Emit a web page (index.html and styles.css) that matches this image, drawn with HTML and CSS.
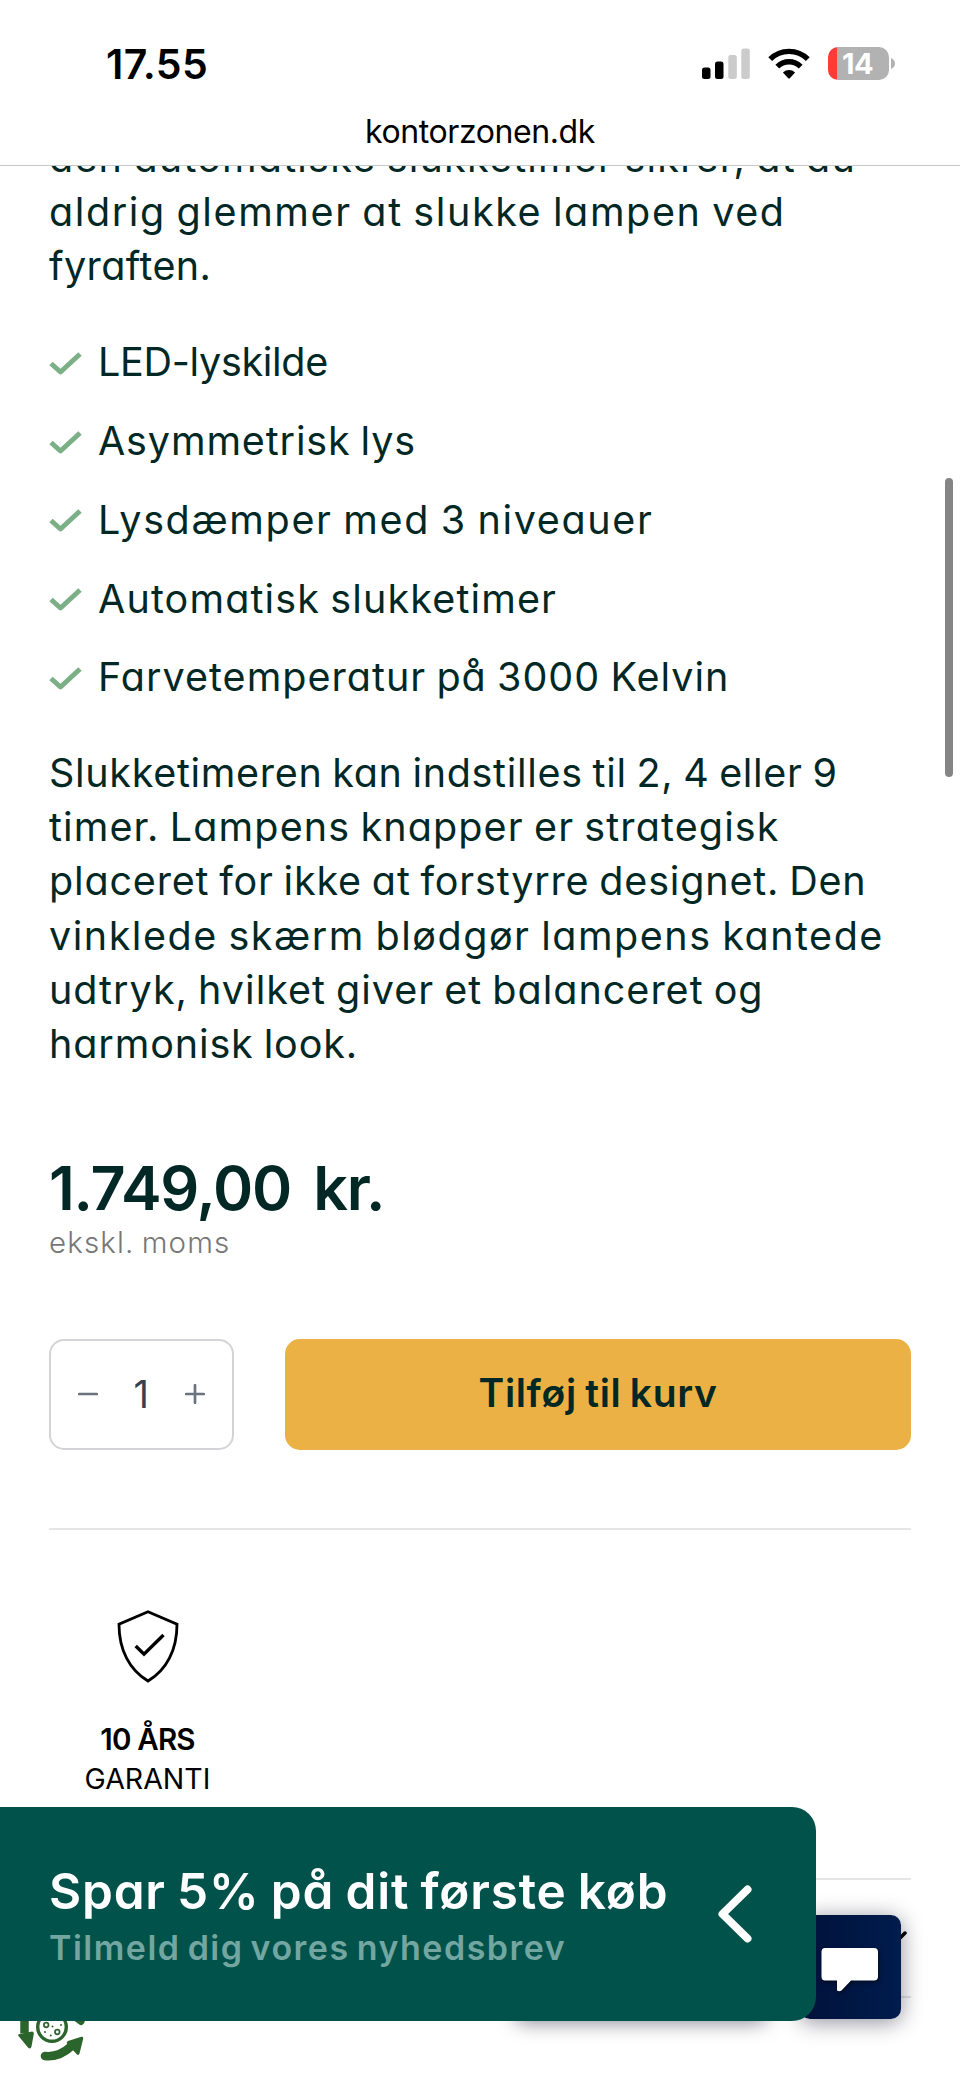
FILE: index.html
```html
<!DOCTYPE html>
<html lang="da">
<head>
<meta charset="utf-8">
<title>kontorzonen.dk</title>
<link rel="stylesheet" href="styles.css">
</head>
<body>
<div class="screen">
  <header class="browser-bar">
    <div class="status">
      <span class="clock">17.55</span>
      <div class="status-icons">
        <svg class="signal" width="50" height="32" viewBox="0 0 50 32">
          <rect x="1" y="19.500" width="8.500" height="11.500" rx="2.500" fill="#000"/>
          <rect x="14" y="13.500" width="8.500" height="17.500" rx="2.500" fill="#000"/>
          <rect x="27.300" y="7" width="8.500" height="24" rx="2.500" fill="#cbcbcb"/>
          <rect x="40.300" y="0.500" width="8.500" height="30.500" rx="2.500" fill="#cbcbcb"/>
        </svg>
        <svg class="wifi" width="42" height="32" viewBox="0 0 42 32">
          <g fill="none" stroke="#000" stroke-width="5.400">
            <path d="M2.200 11.200A26.500 26.500 0 0 1 39.800 11.200"/>
            <path d="M9.300 18.600A16.600 16.600 0 0 1 32.700 18.600"/>
          </g>
          <path d="M14.900 24.400A8.700 8.700 0 0 1 27.100 24.400L22 29.900Q21 30.900 20 29.900Z"/>
        </svg>
        <div class="battery"><span class="battery-level">14</span></div>
        <svg class="battery-tip" width="4" height="11" viewBox="0 0 4 11"><path d="M0 0Q4 2 4 5.500T0 11Z" fill="#b2b2b2"/></svg>
      </div>
    </div>
    <div class="address">kontorzonen.dk</div>
  </header>

  <main class="page">
    <p class="copy intro">
      <span class="line l1">den automatiske slukketimer sikrer, at du</span>
      <span class="line l2">aldrig glemmer at slukke lampen ved</span>
      <span class="line l3">fyraften.</span>
    </p>
    <ul class="features">
      <li><svg class="check" viewBox="0 0 34 26"><path d="M2 12.500L11.500 21L31 3"/></svg><span class="f1">LED-lyskilde</span></li>
      <li><svg class="check" viewBox="0 0 34 26"><path d="M2 12.500L11.500 21L31 3"/></svg><span class="f2">Asymmetrisk lys</span></li>
      <li><svg class="check" viewBox="0 0 34 26"><path d="M2 12.500L11.500 21L31 3"/></svg><span class="f3">Lysdæmper med 3 niveauer</span></li>
      <li><svg class="check" viewBox="0 0 34 26"><path d="M2 12.500L11.500 21L31 3"/></svg><span class="f4">Automatisk slukketimer</span></li>
      <li><svg class="check" viewBox="0 0 34 26"><path d="M2 12.500L11.500 21L31 3"/></svg><span class="f5">Farvetemperatur på 3000 Kelvin</span></li>
    </ul>
    <p class="copy">
      <span class="line d1">Slukketimeren kan indstilles til 2, 4 eller 9</span>
      <span class="line d2">timer. Lampens knapper er strategisk</span>
      <span class="line d3">placeret for ikke at forstyrre designet. Den</span>
      <span class="line d4">vinklede skærm blødgør lampens kantede</span>
      <span class="line d5">udtryk, hvilket giver et balanceret og</span>
      <span class="line d6">harmonisk look.</span>
    </p>

    <div class="price">1.749,00 kr.</div>
    <div class="vat">ekskl. moms</div>

    <div class="buy">
      <div class="quantity">
        <svg width="20" height="20" viewBox="0 0 20 20"><path d="M1.200 10H18.800"/></svg>
        <span class="amount">1</span>
        <svg width="20" height="20" viewBox="0 0 20 20"><path d="M1.200 10H18.800M10 1.200V18.800"/></svg>
      </div>
      <button class="add">Tilføj til kurv</button>
    </div>

    <section class="usp">
      <svg class="shield" width="62" height="73" viewBox="0 0 62 73">
        <path d="M31 1.700L60 14.200C60 40 49.500 60 31 71C12.500 60 2 40 2 14.200Z" stroke-width="2.800"/>
        <path d="M18.700 36L27 44.200L46.500 25" stroke-width="3.400"/>
      </svg>
      <span class="usp-title">10 ÅRS</span>
      <span class="usp-text">GARANTI</span>
    </section>
    <div class="accordion">
      <svg class="accordion-arrow" width="24" height="14" viewBox="0 0 24 14"><path d="M2 2L12 12L22 2"/></svg>
    </div>
  </main>

  <div class="scrollbar"></div>

  <svg class="cookie" width="76" height="76" viewBox="0 0 76 76">
    <circle cx="37" cy="37" r="14.300" fill="#fff" stroke="#2c652c" stroke-width="3.400"/>
    <g fill="none" stroke="#2c652c" stroke-width="1.700"><circle cx="31.200" cy="35" r="2.300"/><circle cx="42.300" cy="42" r="2.300"/></g>
    <g fill="#2c652c"><circle cx="37.500" cy="36.500" r="1"/><circle cx="46" cy="35" r="1"/><circle cx="30" cy="42" r="1"/><circle cx="35.800" cy="45.500" r="1"/></g>
    <path d="M9.500 20V43.500" fill="none" stroke="#2c652c" stroke-width="8.500"/>
    <path d="M3.500 46Q2.500 44 5 44L17 41.500Q19 41.500 18.800 44L16.500 56.500Q15.500 60 13 57.500Z" fill="#2c652c"/>
    <path d="M30 66Q44 67.500 56 56.500" fill="none" stroke="#2c652c" stroke-width="8.600" stroke-linecap="round"/>
    <path d="M52 53.500Q51 52 53 51L65.500 47Q69 46 68 49.500L64.500 63.500Q63.500 66 61.500 64Z" fill="#2c652c"/>
    <path d="M60 27L66 31.500" stroke="#2c652c" stroke-width="7" stroke-linecap="round"/>
  </svg>

  <div class="floating-shadow"></div>
  <div class="chat">
    <svg width="58" height="46" viewBox="0 0 58 46"><path d="M4 1H53Q57 1 57 5V29.500Q57 33.500 53 33.500H30L20.500 43.500Q18.500 45 16 43.500V33.500H4Q.5 33.500 .5 29.500V5Q.5 1 4 1Z" fill="#fff"/></svg>
  </div>

  <aside class="offer">
    <div class="offer-copy">
      <div class="offer-title">Spar 5% på dit første køb</div>
      <div class="offer-text">Tilmeld dig vores nyhedsbrev</div>
    </div>
    <svg class="offer-arrow" width="34" height="58" viewBox="0 0 34 58"><path d="M29.500 4.500L4.500 29L29.500 53.500"/></svg>
  </aside>
</div>
</body>
</html>
```

FILE: styles.css
```css
* { box-sizing: border-box; }
body {
  margin: 0;
  background: #fff;
  color: #022825;
  font-family: Inter, "Noto Sans", sans-serif;
  font-feature-settings: "cv11";
}
.screen { position: relative; width: 960px; height: 2078px; overflow: hidden; white-space: nowrap; }

/* Browser chrome */
.browser-bar { height: 166px; border-bottom: 1px solid #c6cac9; color: #000; font-feature-settings: normal; }
.status { display: flex; justify-content: space-between; align-items: flex-start; height: 108px; padding: 40px 65px 0 106px; }
.clock { font-size: 41px; line-height: 48px; font-weight: 600; letter-spacing: .4px; }
.status-icons { display: flex; align-items: flex-start; padding-top: 8px; }
.wifi { margin-left: 17px; }
.battery {
  display: flex; align-items: center; width: 61px; height: 33px; margin: -1px 2px 0 18px;
  padding-left: 14px; border-radius: 10px; background: linear-gradient(90deg, #fd3b3b 9px, #b2b2b2 9px);
}
.battery-level { color: #fff; font-size: 29px; line-height: 33px; font-weight: 700; letter-spacing: -.6px; }
.battery-tip { margin-top: 10px; }
.address { font-size: 32px; line-height: 48px; text-align: center; letter-spacing: -.4px; }

/* Product copy */
.page { display: flow-root; height: 1912px; padding: 0 49px; overflow: hidden; }
.copy { margin: 0; font-size: 39.5px; line-height: 54.2px; word-spacing: -2px; }
.intro { margin-top: -35px; }
.line { display: block; }
.l1 { letter-spacing: 1.2px; }
.l2 { letter-spacing: 1.6px; }
.l3 { letter-spacing: .4px; }
.features {
  display: grid; gap: 24.6px; margin: 41.5px 0; padding: 0; list-style: none;
  font-size: 39.5px; line-height: 54.2px; word-spacing: -2px;
}
.features li { display: flex; align-items: center; gap: 15px; }
.check { width: 34px; height: 26px; margin-top: 3px; fill: none; stroke: #7bb087; stroke-width: 5; stroke-linejoin: round; }
.f1 { letter-spacing: -.3px; }
.f2 { letter-spacing: .87px; }
.f3 { letter-spacing: 1.64px; }
.f4 { letter-spacing: 1.14px; }
.f5 { letter-spacing: 1.03px; }
.d1 { letter-spacing: .69px; }
.d2 { letter-spacing: 1.12px; }
.d3 { letter-spacing: .82px; }
.d4 { letter-spacing: 1.52px; }
.d5 { letter-spacing: 1px; }
.d6 { letter-spacing: .88px; }

/* Price and cart */
.price { margin-top: 84.5px; font-size: 61px; line-height: 64px; font-weight: 620; letter-spacing: -1.2px; word-spacing: 8px; }
.vat { margin-top: 4px; color: #777; font-size: 29.5px; line-height: 36px; font-weight: 330; letter-spacing: 1.1px; word-spacing: -2px; }
.buy { display: flex; gap: 51.5px; height: 111px; margin-top: 79px; }
.quantity {
  display: flex; align-items: center; justify-content: space-between; width: 184.5px; padding: 0 27px;
  border: 2px solid #d3d4d7; border-radius: 15px; color: #374151; font-size: 38px;
}
.quantity svg { fill: none; stroke: #6b7280; stroke-width: 2.7; stroke-linecap: round; }
.add {
  flex: 1; padding: 0 0 4px; border: 0; border-radius: 15px; background: #ebb144; color: #022825;
  font: 600 39px Inter, "Noto Sans", sans-serif; letter-spacing: .65px; word-spacing: -2px;
}

/* Guarantee */
.usp {
  display: flex; flex-direction: column; align-items: center; height: 350px; margin-top: 78px; padding: 80px 665px 0 0;
  border-top: 2px solid #e4e5e5; color: #000;
}
.shield { flex: none; fill: none; stroke: #000; }
.usp-title { margin-top: 36px; font-size: 29.5px; line-height: 40px; font-weight: 600; letter-spacing: -.8px; }
.usp-text { font-size: 28.5px; line-height: 40px; }
.accordion {
  display: flex; justify-content: flex-end; height: 120px; padding: 51px 4px 0 0;
  border-top: 2px solid #e4e5e5; border-bottom: 2px solid #e4e5e5;
}
.accordion-arrow { fill: none; stroke: #000; stroke-width: 3.5; stroke-linecap: round; }

/* Elements floating over the page */
.scrollbar { position: absolute; top: 478px; right: 7px; width: 8px; height: 299px; border-radius: 4px; background: #858585; }
.cookie { position: absolute; top: 1990px; left: 15px; }
.floating-shadow { position: absolute; top: 1930px; left: 515px; width: 252px; height: 86px; border-radius: 10px; box-shadow: 0 6px 20px rgba(0, 0, 30, .5); }
.chat {
  position: absolute; top: 1915px; left: 800px; display: flex; align-items: center; width: 101px; height: 104px;
  padding: 6px 0 0 21px; border-radius: 10px; background: linear-gradient(90deg, #00113a, #001c4d);
  box-shadow: 0 3px 22px rgba(0, 0, 30, .45);
}
.chat svg { filter: drop-shadow(1px 2px 2px rgba(0, 0, 0, .5)); }
.offer {
  position: absolute; top: 1807px; left: 0; display: flex; justify-content: space-between; width: 815.5px; height: 214px;
  padding: 52px 64px 0 49px; border-radius: 0 24px 24px 0; background: #00524b; color: #fff;
}
.offer-title { font-size: 49.5px; line-height: 64px; font-weight: 630; letter-spacing: .8px; word-spacing: -2px; }
.offer-text { margin-top: 3px; color: #73a6a0; font-size: 34px; line-height: 44px; font-weight: 600; letter-spacing: 1.5px; word-spacing: -3px; }
.offer-arrow { margin-top: 26px; fill: none; stroke: #fff; stroke-width: 8; stroke-linecap: round; stroke-linejoin: round; }
```
